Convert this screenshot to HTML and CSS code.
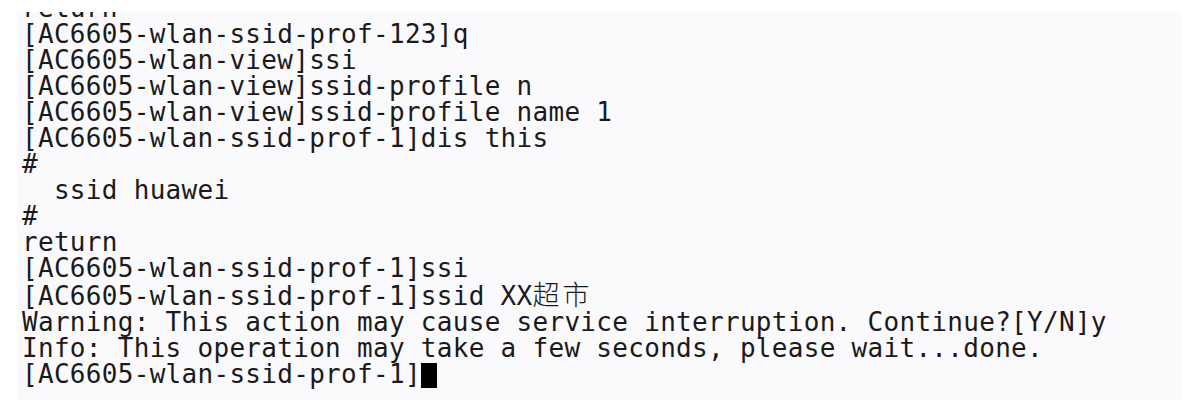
FILE: index.html
```html
<!DOCTYPE html>
<html lang="zh-CN">
<head>
<meta charset="utf-8">
<title>AC6605 terminal</title>
<link rel="stylesheet" href="styles.css">
</head>
<body>
<div class="term">
<pre class="screen"><span class="line">return</span>
<span class="line">[AC6605-wlan-ssid-prof-123]q</span>
<span class="line">[AC6605-wlan-view]ssi</span>
<span class="line">[AC6605-wlan-view]ssid-profile n</span>
<span class="line">[AC6605-wlan-view]ssid-profile name 1</span>
<span class="line">[AC6605-wlan-ssid-prof-1]dis this</span>
<span class="line">#</span>
<span class="line">  ssid huawei</span>
<span class="line">#</span>
<span class="line">return</span>
<span class="line">[AC6605-wlan-ssid-prof-1]ssi</span>
<span class="line">[AC6605-wlan-ssid-prof-1]ssid XX<span class="cjk">超市</span></span>
<span class="line">Warning: This action may cause service interruption. Continue?[Y/N]y</span>
<span class="line">Info: This operation may take a few seconds, please wait...done.</span>
<span class="line">[AC6605-wlan-ssid-prof-1]<span class="cursor"></span></span></pre>
</div>
</body>
</html>
```

FILE: styles.css
```css
html, body {
  margin: 0;
  padding: 0;
  background: #ffffff;
}

.term {
  margin: 12px 2px 0 17px;
  height: 388px;
  background: #faf9fc;
  overflow: hidden;
  padding-left: 5px;
}

.screen {
  margin: -17px 0 0 0;
  font-family: "DejaVu Sans Mono", "Liberation Mono", monospace;
  font-size: 26px;
  line-height: 26px;
  letter-spacing: 0.3px;
  color: #1a1a1a;
  white-space: pre;
}

.cjk {
  font-family: "Noto Sans CJK SC", sans-serif;
  font-size: 27px;
  font-weight: 300;
  letter-spacing: 3px;
}

.cursor {
  display: inline-block;
  width: 16px;
  height: 25px;
  background: #000000;
  vertical-align: -5px;
}
```
